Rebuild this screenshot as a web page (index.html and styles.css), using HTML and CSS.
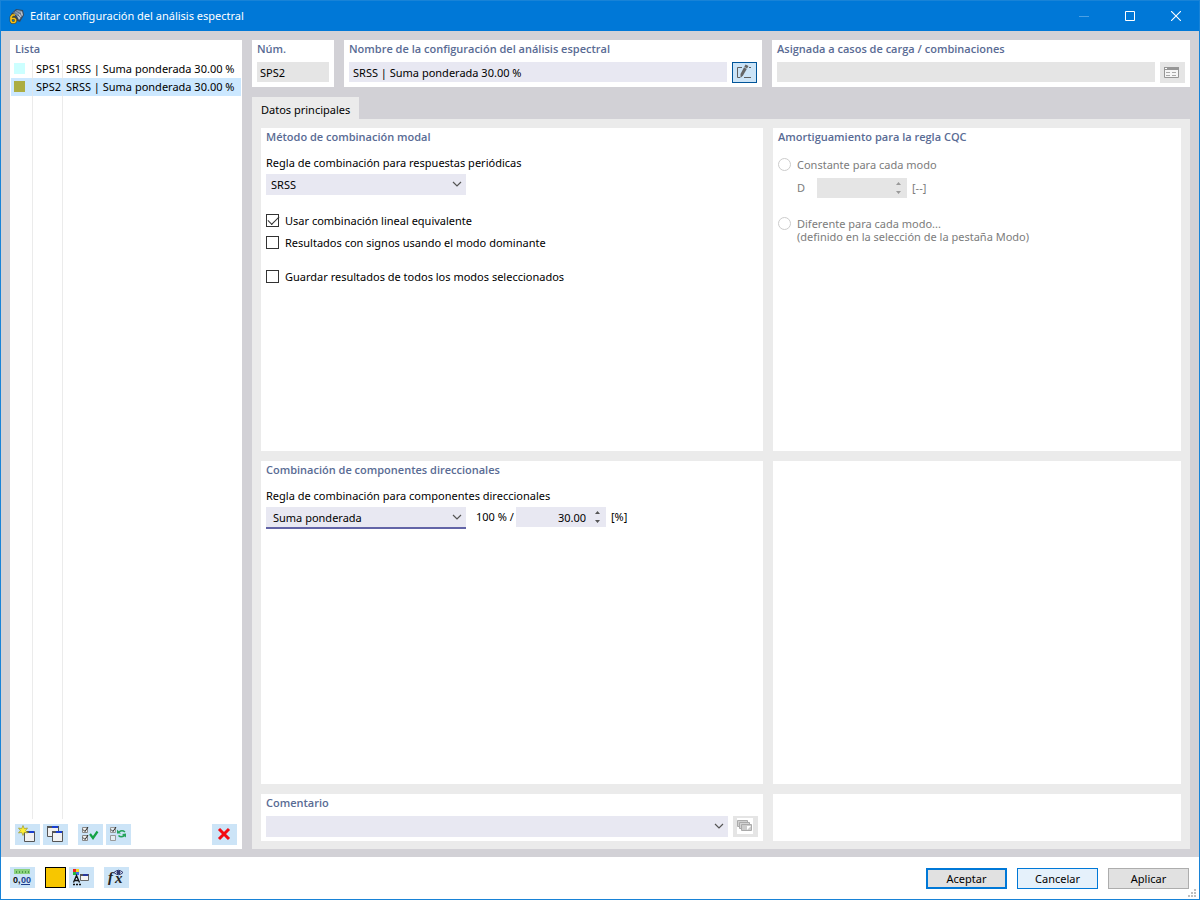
FILE: index.html
```html
<!DOCTYPE html>
<html lang="es">
<head>
<meta charset="utf-8">
<meta name="viewport" content="width=device-width, initial-scale=1">
<title>Editar configuración del análisis espectral</title>
<link rel="stylesheet" href="styles.css">
</head>
<body>
<div class="window">
  <header class="titlebar">
    <svg class="app-icon" viewBox="0 0 16 16" aria-hidden="true">
      <path d="M2 6 L7 1 L14 2 L15 7 L11 14 L8 13 Z" fill="#34485f"/>
      <path d="M4 5 L8 2 L13 3 L8 8 Z" fill="#8d9caf"/>
      <path d="M8 8 L13 3 L14 7 L10 12 Z" fill="#b8c1cd"/>
      <path d="M5 4 L10 8 M7 3 L12 6 M11 5 L13 9 M9 7 L12 10" stroke="#4c5f77" stroke-width=".7" fill="none"/>
      <path d="M6 7 H3.500 L2 9 V13 L3 14.500 H5.500 L6.500 13.500 V11.500 L5.500 10.500 H2" fill="none" stroke="#4b3b10" stroke-width="2.600"/>
      <path d="M6 7 H3.500 L2 9 V13 L3 14.500 H5.500 L6.500 13.500 V11.500 L5.500 10.500 H2" fill="none" stroke="#f4c21c" stroke-width="1.700"/>
    </svg>
    <h1 class="title">Editar configuración del análisis espectral</h1>
    <div class="caption-buttons">
      <button class="caption" disabled aria-label="Minimizar"><svg viewBox="0 0 10 10"><path d="M0 5.500H10" stroke="#4ba0e4"/></svg></button>
      <button class="caption" aria-label="Maximizar"><svg viewBox="0 0 10 10"><path d="M.5 .5H9.500V9.500H.5Z" fill="none" stroke="#fff"/></svg></button>
      <button class="caption" aria-label="Cerrar"><svg viewBox="0 0 10 10"><path d="M0 0L10 10M10 0L0 10" stroke="#fff" stroke-width="1.100"/></svg></button>
    </div>
  </header>

  <main class="content">
    <section class="list-panel">
      <h2 class="heading">Lista</h2>
      <ul class="list">
        <li class="row"><span class="swatch cyan"></span><span>SPS1</span><span>SRSS | Suma ponderada 30.00 %</span></li>
        <li class="row selected"><span class="swatch olive"></span><span>SPS2</span><span>SRSS | Suma ponderada 30.00 %</span></li>
      </ul>
      <div class="list-tools">
        <button class="tool" aria-label="Nuevo"><svg viewBox="0 0 25 21">
          <path d="M9.500 7.500H19.500V17.500H9.500Z" fill="#f1f1f1" stroke="#555"/><path d="M10 7H19V9H10Z" fill="#1a3fd0"/><path d="M10 7H14V9H10Z" fill="#555"/>
          <path d="M8 1.500L9.300 4.600L12.500 4L10.600 6.500L12.500 9L9.300 8.400L8 11.500L6.700 8.400L3.500 9L5.400 6.500L3.500 4L6.700 4.600Z" fill="#ffed32" stroke="#9a9830" stroke-width=".7"/></svg></button>
        <button class="tool" aria-label="Duplicar"><svg viewBox="0 0 25 21">
          <path d="M4.500 2.500H15.500V12.500H4.500Z" fill="#f1f1f1" stroke="#555"/><path d="M4 2H16V4H4Z" fill="#555"/><path d="M9 2H15V4H9Z" fill="#1a3fd0"/>
          <path d="M9.500 7.500H19.500V17.500H9.500Z" fill="#f1f1f1" stroke="#555"/><path d="M9 7H20V9H9Z" fill="#555"/><path d="M13 7H19V9H13Z" fill="#1a3fd0"/></svg></button>
        <button class="tool gap-before" aria-label="Seleccionar todo"><svg viewBox="0 0 25 21">
          <path d="M4.500 3.500H9.500V8.500H4.500ZM4.500 11.500H9.500V16.500H4.500Z" fill="#eee" stroke="#888"/><path d="M5 5.500L7 7.500L10 3M5 13.500L7 15.500L10 11" fill="none" stroke="#222"/>
          <path d="M12 10L15 14L19.500 7.500" fill="none" stroke="#12a244" stroke-width="2.200"/></svg></button>
        <button class="tool" aria-label="Invertir selección"><svg viewBox="0 0 25 21">
          <path d="M4.500 3.500H9.500V8.500H4.500ZM4.500 11.500H9.500V16.500H4.500Z" fill="#e4edf3" stroke="#999"/><path d="M5 5.500L7 7.500L10 3" fill="none" stroke="#222"/>
          <path d="M19 8Q16 5.500 13 8M12.500 11.500Q15 14 18.500 11.500" fill="none" stroke="#23a35a" stroke-width="1.600"/><path d="M11 5.500V9.500H15ZM20 9.500V13.500L16 10Z" fill="#23a35a"/></svg></button>
        <button class="tool push" aria-label="Eliminar"><svg viewBox="0 0 25 21"><path d="M7 5L17 15M17 5L7 15" stroke="#f30a12" stroke-width="3"/></svg></button>
      </div>
    </section>

    <div class="detail">
      <div class="top-cards">
        <section class="card">
          <h2 class="heading"><label for="num">Núm.</label></h2>
          <input class="field readonly number" id="num" value="SPS2" readonly>
        </section>
        <section class="card">
          <h2 class="heading"><label for="name">Nombre de la configuración del análisis espectral</label></h2>
          <div class="inline">
            <input class="field" id="name" value="SRSS | Suma ponderada 30.00 %">
            <button class="tool edit" aria-label="Editar nombre"><svg viewBox="0 0 25 21">
              <path d="M10 5.500H5.500V15.500H8M12 15.500H19M17 5.500H19" fill="none" stroke="#606060"/><path d="M13.500 2.500L16.500 4L11 13.500L8.500 16V12Z" fill="#666"/><path d="M12 5L15.500 7" stroke="#cce4f7" stroke-width=".7"/></svg></button>
          </div>
        </section>
        <section class="card">
          <h2 class="heading"><label for="assigned">Asignada a casos de carga / combinaciones</label></h2>
          <div class="inline">
            <input class="field readonly" id="assigned" readonly>
            <button class="tool off" disabled aria-label="Asignar"><svg viewBox="0 0 25 21">
              <path d="M4.500 5.500H18.500V15.500H4.500Z" fill="#f6f6f6" stroke="#969696"/><path d="M4 5H19V8H4Z" fill="#969696"/><path d="M5 6H7V7H5Z" fill="#fff"/><path d="M6 10.500H10M12 10.500H16M6 13.500H10M12 13.500H16" stroke="#aaa"/></svg></button>
          </div>
        </section>
      </div>

      <nav class="tabs" role="tablist"><button class="tab" role="tab" aria-selected="true">Datos principales</button></nav>

      <div class="tab-body">
        <section class="panel">
          <h2 class="heading">Método de combinación modal</h2>
          <label class="field-label" for="periodic">Regla de combinación para respuestas periódicas</label>
          <div class="select-wrap">
            <select class="field" id="periodic"><option>SRSS</option></select>
            <svg class="chevron" viewBox="0 0 10 6"><path d="M1 1L5 5L9 1"/></svg>
          </div>
          <div class="checks">
            <label class="check"><input type="checkbox" checked>Usar combinación lineal equivalente</label>
            <label class="check"><input type="checkbox">Resultados con signos usando el modo dominante</label>
            <label class="check separate"><input type="checkbox">Guardar resultados de todos los modos seleccionados</label>
          </div>
        </section>

        <section class="panel">
          <h2 class="heading">Amortiguamiento para la regla CQC</h2>
          <div class="radios">
            <label class="radio"><input type="radio" name="damping" disabled><span>Constante para cada modo</span></label>
            <div class="damping">
              <label for="damping">D</label>
              <div class="spin">
                <input class="field readonly" id="damping" type="number" disabled>
                <svg class="arrows" viewBox="0 0 5 12"><path d="M0 3L2.500 0L5 3ZM0 9L2.500 12L5 9Z"/></svg>
              </div>
              <span>[--]</span>
            </div>
            <label class="radio"><input type="radio" name="damping" disabled><span>Diferente para cada modo...<br>(definido en la selección de la pestaña Modo)</span></label>
          </div>
        </section>

        <section class="panel">
          <h2 class="heading">Combinación de componentes direccionales</h2>
          <label class="field-label" for="directional">Regla de combinación para componentes direccionales</label>
          <div class="direction">
            <div class="select-wrap focused">
              <select class="field" id="directional"><option>Suma ponderada</option></select>
              <svg class="chevron" viewBox="0 0 10 6"><path d="M1 1L5 5L9 1"/></svg>
            </div>
            <label class="ratio" for="percent">100 % /</label>
            <div class="spin">
              <input class="field" id="percent" type="number" step="0.01" value="30.00">
              <svg class="arrows" viewBox="0 0 5 12"><path d="M0 3L2.500 0L5 3ZM0 9L2.500 12L5 9Z"/></svg>
            </div>
            <span class="unit">[%]</span>
          </div>
        </section>

        <section class="panel"></section>

        <section class="panel comment">
          <h2 class="heading"><label for="comment">Comentario</label></h2>
          <div class="inline">
            <div class="select-wrap wide">
              <select class="field" id="comment"><option></option></select>
              <svg class="chevron" viewBox="0 0 10 6"><path d="M1 1L5 5L9 1"/></svg>
            </div>
            <button class="tool off" disabled aria-label="Comentarios guardados"><svg viewBox="0 0 25 21">
              <path d="M4 2H20V18H4Z" fill="#fff"/><path d="M4.500 4.500H14.500V10.500H4.500Z" fill="#d0d0d0" stroke="#aaa"/><path d="M6.500 6.500H16.500V12.500H6.500Z" fill="#d4d4d4" stroke="#aaa"/><path d="M8.500 8.500H18.500V14.500H8.500Z" fill="#ccc" stroke="#aaa"/><path d="M14 10V14L15 13L18 10" fill="#fff"/></svg></button>
          </div>
        </section>

        <section class="panel"></section>
      </div>
    </div>
  </main>

  <footer class="footer">
    <button class="tool" aria-label="Unidades y decimales"><svg viewBox="0 0 25 21">
      <path d="M4 2H20V7H4Z" fill="#8bd17f"/><path d="M6.500 4V6M9.500 4V6M12.500 4V6M15.500 4V6M18.500 4V6" stroke="#4d9d4a"/>
      <text x="3" y="16" class="icon-digits">0,</text><text x="11" y="16" class="icon-digits blue">00</text><path d="M11 17.500H20" stroke="#1e3f8f"/></svg></button>
    <button class="color" aria-label="Color"></button>
    <button class="tool" aria-label="Opciones de visualización"><svg viewBox="0 0 25 21">
      <path d="M4 2H7V5H4Z" fill="#ef2323"/><path d="M7 2H10V5H7Z" fill="#f4d81c"/><path d="M4 5H7V8H4Z" fill="#24b83c"/><path d="M7 5H10V8H7Z" fill="#416ae8"/>
      <path d="M4.500 15.500L7.500 8.500L10.500 15.500M5.500 13.500H9.500M4 17.500H6M7 17.500H9M10 17.500H12" fill="none" stroke="#111" stroke-width="1.300"/>
      <path d="M11.500 7.500H19.500V13.500H11.500Z" fill="#f3f3f3" stroke="#666"/><path d="M11 7H20V9H11Z" fill="#555"/><path d="M14 7H19V9H14Z" fill="#27379c"/></svg></button>
    <button class="tool function" aria-label="Fórmula"><svg viewBox="0 0 25 21">
      <text x="4" y="15" class="icon-formula">f</text><text x="11" y="16" class="icon-formula">x</text>
      <path d="M10 5.500Q14.500 1 19 5.500Q14.500 10 10 5.500Z" fill="#dae3f7" stroke="#30386f"/><circle cx="14.500" cy="5.500" r="2" fill="#30386f"/></svg></button>
    <div class="actions">
      <button class="action primary">Aceptar</button>
      <button class="action hover">Cancelar</button>
      <button class="action">Aplicar</button>
    </div>
    <svg class="grip" viewBox="0 0 8 8" aria-hidden="true"><path d="M6 0H8V2H6ZM3 3H5V5H3ZM6 3H8V5H6ZM0 6H2V8H0ZM3 6H5V8H3ZM6 6H8V8H6Z" fill="#bfbfbf"/></svg>
  </footer>
</div>
</body>
</html>
```
FILE: styles.css
```css
* { box-sizing: border-box; }
body { margin: 0; color: #000; font: 11px/14px "Noto Sans", "Open Sans", sans-serif; }
button, input, select { font: inherit; color: inherit; margin: 0; border: 0; border-radius: 0; padding: 0; }
svg { display: block; }
.window { display: flex; flex-direction: column; min-height: 100vh; border: 1px solid #1883d7; background: #fff; }

.titlebar { display: flex; align-items: center; height: 30px; padding-left: 8px; background: #0078d7; color: #fff; }
.app-icon { width: 16px; height: 16px; }
.title { flex: 1; margin: 0 0 0 5px; font-size: 11px; font-weight: 400; line-height: 16px; }
.caption-buttons { display: flex; }
.caption { display: grid; place-items: center; width: 46px; height: 30px; background: none; }
.caption svg { width: 10px; height: 10px; }

.content { flex: 1; display: flex; gap: 10px; padding: 9px 9px 8px; background: #d2d1d6; }
.heading { margin: 0; color: #596b94; font-family: "Open Sans", "Noto Sans", sans-serif; font-size: 11px; font-weight: 600; line-height: 14px; }
.list-panel { display: flex; flex-direction: column; width: 232px; flex: none; padding: 2px 1px 4px; background: #fff; }
.list-panel .heading { padding-left: 4px; }
.list {
  flex: 1; margin: 4px 0 5px; padding: 0; list-style: none;
  background: linear-gradient(#ebebeb, #ebebeb) 21px 0 / 1px 100% no-repeat, linear-gradient(#ebebeb, #ebebeb) 51px 0 / 1px 100% no-repeat;
}
.row { display: grid; grid-template-columns: 22px 30px 1fr; align-items: center; height: 18px; padding-left: 3px; white-space: nowrap; }
.selected { background: linear-gradient(#dde5ec, #dde5ec) 21px 0 / 1px 100% no-repeat, linear-gradient(#dde5ec, #dde5ec) 51px 0 / 1px 100% no-repeat, #cce8ff; }
.swatch { width: 11px; height: 11px; margin-bottom: 2px; }
.cyan { background: #ccffff; }
.olive { background: #acad42; }
.list-tools { display: flex; gap: 3px; padding: 0 4px; }
.tool { flex: none; width: 25px; height: 21px; background: #cce4f7; }
.tool svg { width: 100%; height: 100%; }
.gap-before { margin-left: 7px; }
.push { margin-left: auto; }

.detail { flex: 1; min-width: 0; display: flex; flex-direction: column; }
.top-cards { display: grid; grid-template-columns: 82px 1fr 1fr; gap: 10px; }
.card { min-width: 0; height: 47px; padding: 2px 5px 4px; background: #fff; }
.card .field { margin-top: 6px; }
.inline { display: flex; gap: 5px; }
.field { display: block; width: 100%; height: 20px; padding: 0 4px; background: #e8e8f2; outline: 0; }
.field.readonly { background: #e5e5e5; }
.field.number { padding: 0 3px; }
.card .tool { margin-top: 6px; }
.edit { border: 1px solid #005499; }
.edit svg { margin: -1px; width: 25px; height: 21px; }
.off { background: #e5e5e5; }

.tabs { display: flex; margin-top: 10px; }
.tab { height: 22px; padding: 3px 9px 0; background: #ebebeb; }
.tab-body { flex: 1; display: grid; grid-template-columns: 502fr 408fr; grid-template-rows: 1fr 1fr 47px; gap: 10px; padding: 9px 9px 8px; background: #ebebeb; }
.panel { min-width: 0; padding: 2px 5px 5px; background: #fff; }
.field-label { display: block; margin: 12px 0 4px; }
.select-wrap { position: relative; width: 200px; }
.select-wrap.wide { flex: 1; width: auto; }
select.field { appearance: none; height: 21px; padding: 0 22px 0 5px; }
.focused select.field { height: 22px; padding-top: 2px; padding-left: 7px; border-bottom: 2px solid #6264a7; }
.chevron { position: absolute; right: 4px; top: 7px; width: 10px; height: 6px; pointer-events: none; }
.chevron path { fill: none; stroke: #555; stroke-width: 1.200; }
.checks { display: grid; gap: 8px; margin-top: 19px; }
.check { display: flex; align-items: flex-start; gap: 6px; }
.separate { margin-top: 12px; }
.check input { appearance: none; width: 13px; height: 13px; border: 1px solid #333; background: #fff; }
.check input:checked::before { content: ""; display: block; width: 10px; height: 5px; margin: 1px 0 0 1px; border: solid #333; border-width: 0 0 1px 1px; transform: rotate(-45deg); }

.radios { margin-top: 14px; color: #7c7c7c; }
.radio { display: flex; align-items: flex-start; gap: 6px; line-height: 13px; }
.radio input { appearance: none; flex: none; width: 13px; height: 13px; border: 1px solid #ccc; border-radius: 50%; }
.damping { display: flex; align-items: center; gap: 5px; margin: 7px 0 19px 19px; }
.damping label { width: 15px; }
.spin { position: relative; width: 90px; }
.spin .field { appearance: textfield; padding-right: 20px; text-align: right; }
.spin .field::-webkit-inner-spin-button { appearance: none; margin: 0; }
.arrows { position: absolute; right: 6px; top: 4px; width: 5px; height: 12px; fill: #555; pointer-events: none; }
.damping .arrows { fill: #999; }
.direction { display: flex; align-items: flex-start; }
.ratio, .unit { line-height: 20px; }
.ratio { width: 40px; margin-left: 10px; white-space: nowrap; }
.unit { margin-left: 5px; }
.comment .inline { margin-top: 6px; }

.footer { position: relative; display: flex; align-items: flex-start; height: 42px; padding: 10px 10px 0 9px; }
.color { width: 21px; height: 21px; margin: 0 3px 0 10px; border: 1px solid #000; background: #f7c600; }
.function { margin-left: 10px; }
.icon-digits { font: 700 9px "Liberation Sans", sans-serif; fill: #111; }
.icon-digits.blue { fill: #1e3f8f; }
.icon-formula { font: italic 700 15px "Liberation Serif", serif; fill: #222; }
.actions { display: flex; gap: 10px; margin: 1px 0 0 auto; }
.action { width: 81px; height: 21px; padding-top: 1px; border: 1px solid #adadad; background: #e1e1e1; }
.primary { border: 2px solid #0078d7; }
.hover { border-color: #0078d7; background: #e5f1fb; }
.grip { position: absolute; right: 3px; bottom: 2px; width: 8px; height: 8px; }
```
